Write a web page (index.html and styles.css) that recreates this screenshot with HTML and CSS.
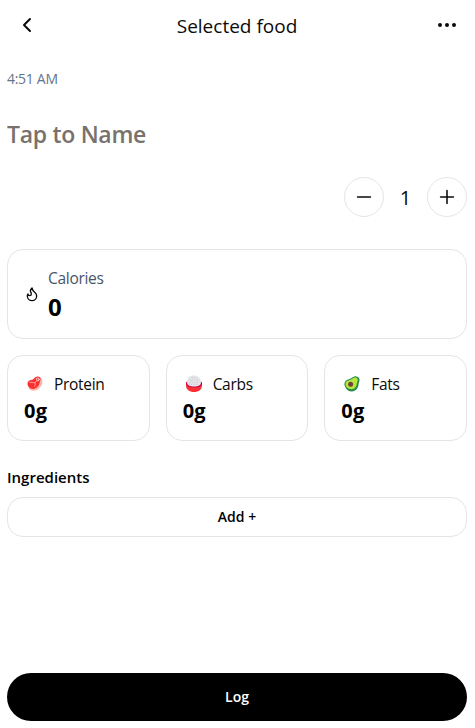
FILE: index.html
```html
<!DOCTYPE html>
<html lang="en">
<head>
<meta charset="utf-8">
<title>Selected food</title>
<link rel="stylesheet" href="styles.css">
</head>
<body>
<main class="page">
  <header class="header">
    <button class="icon-button" aria-label="Back">
      <svg class="icon" viewBox="0 0 24 24"><path d="m15 18-6-6 6-6"/></svg>
    </button>
    <h1 class="title"><span>Selected food</span></h1>
    <button class="icon-button" aria-label="More">
      <svg class="icon" viewBox="0 0 24 24"><circle cx="12" cy="12" r="1"/><circle cx="19" cy="12" r="1"/><circle cx="5" cy="12" r="1"/></svg>
    </button>
  </header>
  <div class="time"><span>4:51 AM</span></div>
  <h2 class="name"><span>Tap to Name</span></h2>
  <div class="stepper">
    <button class="round" aria-label="Decrease"><svg class="step-icon" viewBox="0 0 24 24"><path d="M5 12h14"/></svg></button>
    <span class="count">1</span>
    <button class="round" aria-label="Increase"><svg class="step-icon" viewBox="0 0 24 24"><path d="M5 12h14M12 5v14"/></svg></button>
  </div>
  <section class="card calories">
    <svg class="flame" viewBox="0 0 24 24"><path d="M8.5 14.5A2.5 2.5 0 0 0 11 12c0-1.38-.5-2-1-3-1.072-2.143-.224-4.054 2-6 .5 2.5 2 4.9 4 6.5 2 1.6 3 3.5 3 5.5a7 7 0 1 1-14 0c0-1.153.433-2.294 1-3a2.5 2.5 0 0 0 2.5 2.5z"/></svg>
    <div>
      <div class="calories-label"><span>Calories</span></div>
      <div class="calories-value"><span>0</span></div>
    </div>
  </section>
  <section class="macros">
    <div class="card macro">
      <div class="macro-head">
        <svg class="food" viewBox="0 0 16 16">
          <path fill="#ffb5ab" d="M10.5.8C13 .3 15 2 14.9 4c.9 1.5.6 3.4-.2 4.8-1.3 3.3-4.4 6-8.2 6-2.6 0-4.4-1.4-4.9-3z"/>
          <path fill="#fa2f30" d="M8.3 1.200c2-1.400 4.800-.8 5.200 1.400.3 1.700-.6 2.600-.9 4.200-.5 3-3.300 6.300-6.800 6.100C3 12.800.5 10.700.5 7.800c0-2 1.400-3.500 3.300-3.700 2.100-.2 3-1.500 4.500-2.900z"/>
          <circle cx="10.800" cy="3.400" r="1.400" fill="#fa2f30" stroke="#ffd6cf" stroke-width="1"/>
          <path fill="none" stroke="#ffb5ab" stroke-width=".9" d="M2.700 6.300c2 .1 3.600.1 5 .6 1 .5.4 2.100.1 3.400M7.700 6.900l2-2.200"/>
        </svg>
        <span class="macro-label">Protein</span>
      </div>
      <div class="macro-value"><span>0g</span></div>
    </div>
    <div class="card macro">
      <div class="macro-head">
        <svg class="food" viewBox="0 0 16 16">
          <path fill="#fb3035" d="M0 6.500h16v3c0 4-3.200 6.500-8 6.500S0 13.500 0 9.500z"/>
          <path fill="#ca0b4a" d="M0 6.500c0-1 2-1.600 8-1.600s8 .6 8 1.600v1c0 2.500-3 4-8 4S0 10 0 7.500z"/>
          <path fill="#e6e5e9" d="M1 6.300C1 2.300 4-.4 8-.4s7 2.700 7 6.700c0 2.900-3 4.300-7 4.300S1 9.200 1 6.300z"/>
          <path fill="none" stroke="#bcb9c1" stroke-width=".8" stroke-dasharray=".1 2.400" d="M6 1.300h5M4 3h9M2.800 4.800h11M4 6.600h10M3 8.300h10"/>
        </svg>
        <span class="macro-label">Carbs</span>
      </div>
      <div class="macro-value"><span>0g</span></div>
    </div>
    <div class="card macro">
      <div class="macro-head">
        <svg class="food" viewBox="0 0 16 16">
          <path fill="#2d8742" d="M10 .8c2.500-1 5.300.3 5.500 2.700.2 1.600-.8 2.700-.9 4.600-.2 4-2.700 7.400-6.700 7.400-3.300 0-5.400-2-6.300-4z"/>
          <path fill="#229254" d="M9 1.100c2-1.100 5.200-.5 5.700 1.700.4 1.900-.7 2.900-.8 4.700-.3 3.900-2.700 6.700-6.300 6.700C3.500 14.200.4 11.500.4 8c0-2.700 2.200-4.300 4.500-4.700C6.700 3 7.400 2 9 1.100z"/>
          <path fill="#b9e53c" d="M9.400 2c1.700-.8 3.900-.4 4.300 1.200.4 1.600-.7 2.600-.9 4.300-.3 3.300-2.200 5.700-5.300 5.700-3.400 0-6-2.300-6-5.200 0-2.200 1.700-3.500 3.700-3.800C7.100 3.900 7.700 2.900 9.400 2z"/>
          <circle cx="6.600" cy="8.200" r="2.500" fill="#6f4434"/>
        </svg>
        <span class="macro-label">Fats</span>
      </div>
      <div class="macro-value"><span>0g</span></div>
    </div>
  </section>
  <h3 class="ingredients"><span>Ingredients</span></h3>
  <button class="add"><span>Add +</span></button>
  <button class="log"><span>Log</span></button>
</main>
</body>
</html>
```
FILE: styles.css
```css
* { box-sizing: border-box; margin: 0; padding: 0; }
body {
  background: #fff;
  color: #0c0a09;
  font-family: "Open Sans", "Noto Sans", sans-serif;
}
button { border: 0; background: none; font: inherit; color: inherit; }
.page {
  width: 475px;
  height: 728px;
  padding: 5px 8px 7px 7px;
  display: flex;
  flex-direction: column;
}
.header { display: flex; height: 40px; align-items: center; justify-content: space-between; }
.icon-button { width: 40px; height: 40px; display: grid; place-items: center; }
svg { display: block; fill: none; stroke-linecap: round; stroke-linejoin: round; overflow: visible; }
.icon { width: 24px; height: 24px; stroke: #0c0a09; stroke-width: 2; }
.title { font-size: 19px; font-weight: 400; line-height: 28px; padding-top: 2px; }
.time { margin-top: 24px; height: 20px; line-height: 20px; font-size: 14px; letter-spacing: -0.3px; color: #64748b; }
.name { margin-top: 26px; height: 40px; line-height: 38px; font-size: 23px; font-weight: 600; letter-spacing: -0.3px; color: #78716c; }
.stepper { margin-top: 22px; display: flex; height: 40px; align-items: center; justify-content: flex-end; }
.round { width: 40px; height: 40px; border: 1px solid #e5e5e5; border-radius: 50%; display: grid; place-items: center; }
.step-icon { width: 22px; height: 22px; stroke: #0c0a09; stroke-width: 1.700; }
.count { width: 43px; text-align: center; font-size: 20px; line-height: 28px; padding-top: 1px; }
.card { border: 1px solid #e5e5e5; border-radius: 16px; }
.calories { margin-top: 32px; height: 90px; padding: 0 16px; display: flex; align-items: center; gap: 8px; }
.flame { width: 16px; height: 16px; stroke: #0c0a09; stroke-width: 2; }
.calories-label { font-size: 15.500px; line-height: 24px; letter-spacing: -0.3px; color: #475569; padding-bottom: 1px; }
.calories-value { font-size: 24px; line-height: 32px; font-weight: 700; color: #000; }
.macros { margin-top: 16px; display: grid; grid-template-columns: repeat(3, 1fr); gap: 16px; }
.macro { height: 86px; padding: 16px; }
.macro-head { display: flex; height: 24px; align-items: center; padding-left: 3px; gap: 11px; }
.food { width: 16px; height: 16px; }
.macro-label { font-size: 15.500px; line-height: 24px; letter-spacing: -0.3px; }
.macro-value { font-size: 20px; line-height: 28px; font-weight: 700; color: #000; margin-top: 1px; letter-spacing: 0.2px; }
.ingredients { margin-top: 24px; height: 24px; line-height: 24px; font-size: 15px; font-weight: 600; color: #000; }
.add { margin-top: 8px; height: 40px; border: 1px solid #e5e5e5; border-radius: 16px; font-size: 14px; font-weight: 600; color: #000; padding-bottom: 2px; }
.log { margin-top: auto; height: 48px; border-radius: 24px; background: #000; color: #fff; font-size: 14px; font-weight: 600; padding-bottom: 2px; }
```
